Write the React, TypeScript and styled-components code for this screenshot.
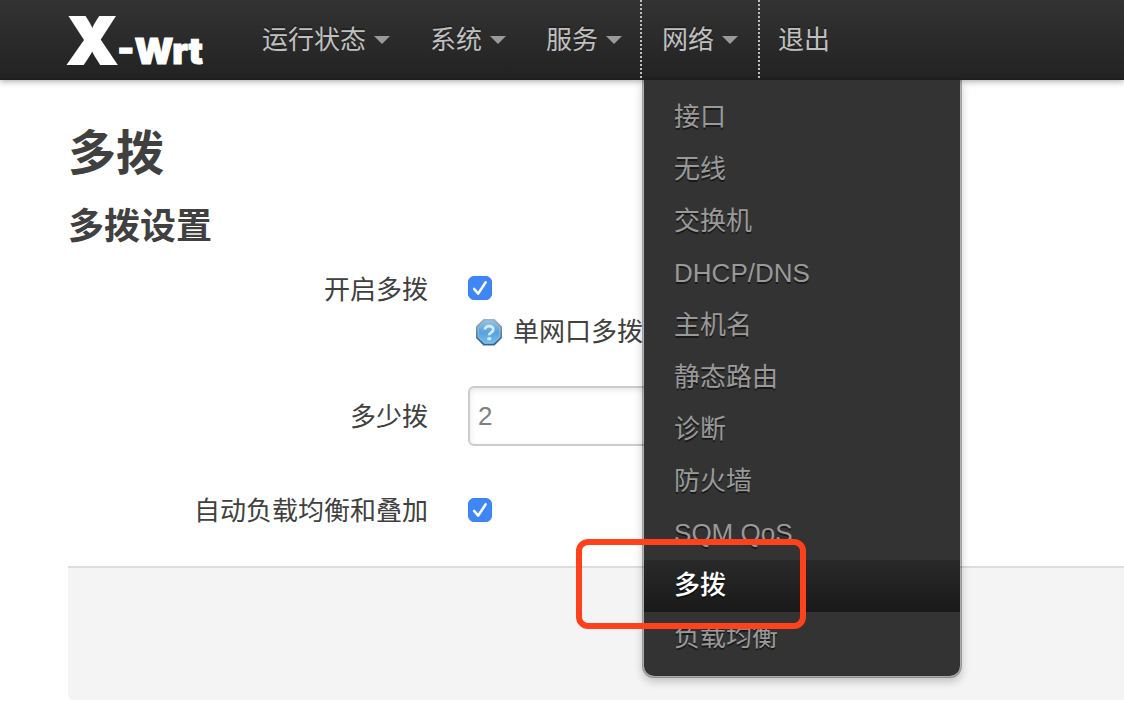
import React from "react";
import styled, { createGlobalStyle } from "styled-components";

const Global = createGlobalStyle`
  *, *::before, *::after { box-sizing: border-box; }
  body {
    margin: 0;
    background: #fff;
    color: #404040;
    font-family: "Liberation Sans", "Noto Sans CJK SC", sans-serif;
    font-size: 26px;
    line-height: 36px;
  }
`;

const Header = styled.header`
  position: relative;
  z-index: 2;
  display: flex;
  height: 80px;
  padding-left: 67px;
  background: linear-gradient(#333, #222);
  box-shadow: 0 2px 6px rgba(0, 0, 0, 0.3), inset 0 -2px 0 rgba(0, 0, 0, 0.1);
`;

const Brand = styled.a`
  flex: none;
  display: flex;
  align-items: baseline;
  width: 175px;
  color: #fff;
  font-family: Inter, sans-serif;
  font-weight: 900;
  font-size: 36px;
  line-height: 82px;
  text-decoration: none;
  -webkit-text-stroke: 1px #fff;
`;

const BrandInitial = styled.span`
  font-size: 64px;
  -webkit-text-stroke: 2px #fff;
`;

const Nav = styled.ul`
  display: flex;
  margin: 0;
  padding: 0;
  list-style: none;
`;

const NavItem = styled.li<{ $open?: boolean }>`
  position: relative;
  ${(p) =>
    p.$open &&
    `
    height: 78px;
    margin: 0 -2px;
    border: dotted #bfbfbf;
    border-width: 0 2px;
  `}
`;

const NavLink = styled.a`
  display: flex;
  align-items: center;
  gap: 8px;
  height: 80px;
  padding: 0 20px;
  color: #bfbfbf;
  text-decoration: none;
  text-shadow: 0 -2px 0 rgba(0, 0, 0, 0.25);
  white-space: nowrap;
`;

const Caret = styled.span`
  border: 8px solid transparent;
  border-top-color: #999;
  border-bottom: 0;
`;

const Menu = styled.ul`
  position: absolute;
  top: 80px;
  left: 0;
  width: 320px;
  margin: 0;
  padding: 12px 0;
  list-style: none;
  background: #333;
  background-clip: padding-box;
  border: 2px solid rgba(0, 0, 0, 0.3);
  border-top: 0;
  border-radius: 0 0 12px 12px;
  box-shadow: 0 4px 8px rgba(0, 0, 0, 0.2);
`;

const MenuItem = styled.li`
  position: relative;
`;

const MenuLink = styled.a<{ $active?: boolean }>`
  display: block;
  padding: 7px 30px 9px;
  color: ${(p) => (p.$active ? "#fff" : "#999")};
  font-weight: ${(p) => (p.$active ? 500 : 400)};
  background: ${(p) => (p.$active ? "linear-gradient(#292929, #191919)" : "none")};
  text-decoration: none;
  text-shadow: 0 2px 0 rgba(0, 0, 0, 0.5);
`;

const Highlight = styled.span`
  position: absolute;
  z-index: 1;
  top: -21px;
  left: -68px;
  width: 230px;
  height: 90px;
  border: 6px solid #ff421b;
  border-radius: 12px;
  pointer-events: none;
`;

const Main = styled.main`
  padding: 37px 0 0 68px;
`;

const Title = styled.h1`
  margin: 0;
  font-size: 48px;
  line-height: 74px;
`;

const Subtitle = styled.h2`
  margin: 0;
  font-size: 36px;
  line-height: 72px;
`;

const Form = styled.form`
  padding-top: 7px;
`;

const Fields = styled.div`
  display: flex;
  flex-direction: column;
  gap: 36px;
  padding-bottom: 28px;
`;

const Row = styled.div<{ $top?: boolean }>`
  display: grid;
  grid-template-columns: 360px minmax(0, 1fr);
  column-gap: 40px;
  align-items: ${(p) => (p.$top ? "start" : "center")};
  min-height: 56px;
`;

const Label = styled.label`
  padding-top: 2px;
  text-align: right;
`;

const Control = styled.div`
  display: flex;
  flex-direction: column;
  gap: 8px;
`;

const CheckLine = styled.span`
  display: flex;
  align-items: center;
  height: 36px;
`;

const CheckWrap = styled.span`
  display: grid;
  width: 24px;
  height: 24px;

  & > * {
    grid-area: 1 / 1;
  }
  & > svg {
    pointer-events: none;
  }
`;

const CheckInput = styled.input`
  appearance: none;
  width: 24px;
  height: 24px;
  margin: 0;
  border-radius: 6px;
  border: 1px solid #bbb;

  &:checked {
    border-color: #3b80ee;
    background: #3f87f7;
  }
  &:not(:checked) + svg {
    visibility: hidden;
  }
`;

const Hint = styled.div`
  display: flex;
  align-items: center;
  gap: 10px;
  padding-left: 7px;
`;

const TextInput = styled.input`
  width: 420px;
  max-width: 100%;
  height: 60px;
  padding: 0 8px;
  border: 2px solid #ccc;
  border-radius: 6px;
  background: #fff;
  color: #808080;
  font: inherit;
  box-shadow: inset 0 2px 6px rgba(0, 0, 0, 0.1);
`;

const Actions = styled.div`
  height: 134px;
  background: #f4f4f4;
  border-top: 2px solid #ddd;
  border-bottom-left-radius: 6px;
`;

function Check({ id }: { id: string }) {
  return (
    <CheckLine>
      <CheckWrap>
        <CheckInput id={id} type="checkbox" defaultChecked />
        <svg width="24" height="24" viewBox="0 0 24 24" aria-hidden="true">
          <path
            d="M6.2 13 L10.2 17.6 L17.6 6.4"
            fill="none"
            stroke="#fff"
            strokeWidth="2.6"
            strokeLinecap="round"
            strokeLinejoin="round"
          />
        </svg>
      </CheckWrap>
    </CheckLine>
  );
}

function HelpIcon() {
  return (
    <svg width="28" height="28" viewBox="0 0 28 28" aria-hidden="true">
      <defs>
        <linearGradient id="rim" x1="0" y1="0" x2="0" y2="1">
          <stop offset="0" stopColor="#a9b4bd" />
          <stop offset="0.5" stopColor="#66839d" />
          <stop offset="1" stopColor="#33618c" />
        </linearGradient>
        <linearGradient id="face" x1="0" y1="0" x2="0" y2="1">
          <stop offset="0" stopColor="#8fc0e6" />
          <stop offset="0.5" stopColor="#58a2dc" />
          <stop offset="1" stopColor="#6cbcf2" />
        </linearGradient>
      </defs>
      <path d="M8.5 1 H19.5 L27 8.5 V20 L19.5 27.5 H8.5 L1 20 V8.5 Z" fill="url(#rim)" />
      <path
        d="M9.5 3.2 H18.5 L24.8 9.5 V19 L18.5 25.2 H9.5 L3.2 19 V9.5 Z"
        fill="url(#face)"
        stroke="#8fc6ec"
        strokeWidth="1"
      />
      <path
        d="M10 11.6 C10 7 18.3 7 18.3 11.4 C18.3 14.4 14.2 14.2 14.2 17.2"
        fill="none"
        stroke="#d6ebfa"
        strokeWidth="2.8"
      />
      <rect x="12.2" y="19.2" width="4" height="3" rx="1" fill="#d6ebfa" />
    </svg>
  );
}

const menu = [
  "接口",
  "无线",
  "交换机",
  "DHCP/DNS",
  "主机名",
  "静态路由",
  "诊断",
  "防火墙",
  "SQM QoS",
  "多拨",
  "负载均衡",
];

const nav = [
  { label: "运行状态", caret: true },
  { label: "系统", caret: true },
  { label: "服务", caret: true },
  { label: "网络", caret: true, items: menu },
  { label: "退出", caret: false },
];

export default function App() {
  return (
    <>
      <Global />
      <Header>
        <Brand href="#">
          <BrandInitial>X</BrandInitial>-Wrt
        </Brand>
        <Nav>
          {nav.map((n) => (
            <NavItem key={n.label} $open={!!n.items}>
              <NavLink href="#">
                {n.label}
                {n.caret && <Caret />}
              </NavLink>
              {n.items && (
                <Menu>
                  {n.items.map((item) => (
                    <MenuItem key={item}>
                      <MenuLink href="#" $active={item === "多拨"}>
                        {item}
                      </MenuLink>
                      {item === "多拨" && <Highlight />}
                    </MenuItem>
                  ))}
                </Menu>
              )}
            </NavItem>
          ))}
        </Nav>
      </Header>
      <Main>
        <Title>多拨</Title>
        <Subtitle>多拨设置</Subtitle>
        <Form>
          <Fields>
            <Row $top>
              <Label htmlFor="enable">开启多拨</Label>
              <Control>
                <Check id="enable" />
                <Hint>
                  <HelpIcon />
                  单网口多拨
                </Hint>
              </Control>
            </Row>
            <Row>
              <Label htmlFor="count">多少拨</Label>
              <TextInput id="count" type="text" defaultValue="2" />
            </Row>
            <Row>
              <Label htmlFor="balance">自动负载均衡和叠加</Label>
              <Check id="balance" />
            </Row>
          </Fields>
          <Actions />
        </Form>
      </Main>
    </>
  );
}
